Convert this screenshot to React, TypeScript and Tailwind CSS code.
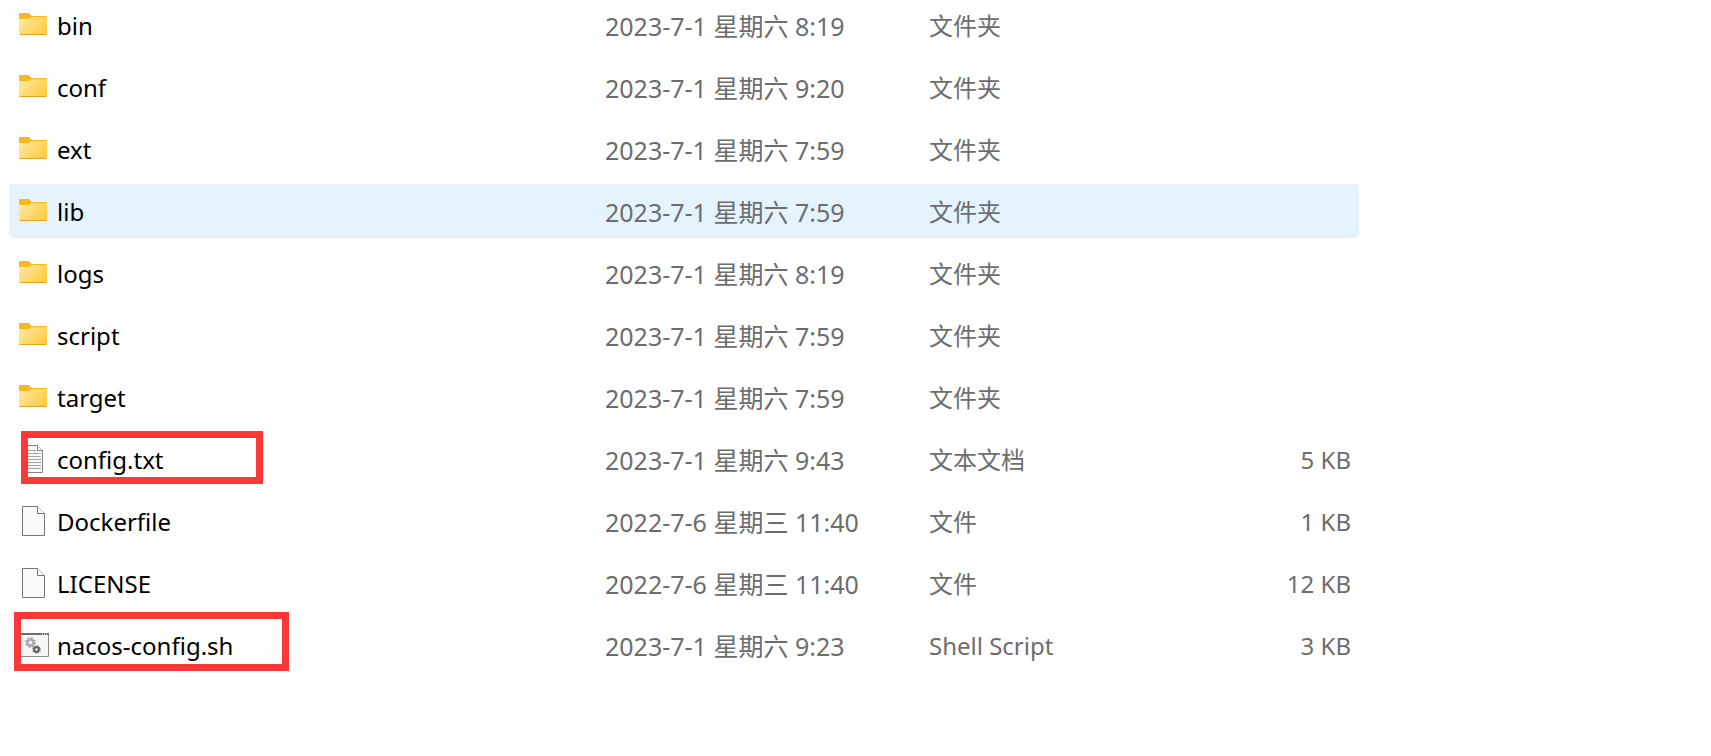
import type { ReactNode } from "react";

type Kind = "folder" | "text" | "file" | "script";

type Entry = {
  name: string;
  kind: Kind;
  modified: string;
  type: string;
  size?: string;
  hovered?: boolean;
  mark?: string;
};

const entries: Entry[] = [
  { name: "bin", kind: "folder", modified: "2023-7-1 星期六 8:19", type: "文件夹" },
  { name: "conf", kind: "folder", modified: "2023-7-1 星期六 9:20", type: "文件夹" },
  { name: "ext", kind: "folder", modified: "2023-7-1 星期六 7:59", type: "文件夹" },
  { name: "lib", kind: "folder", modified: "2023-7-1 星期六 7:59", type: "文件夹", hovered: true },
  { name: "logs", kind: "folder", modified: "2023-7-1 星期六 8:19", type: "文件夹" },
  { name: "script", kind: "folder", modified: "2023-7-1 星期六 7:59", type: "文件夹" },
  { name: "target", kind: "folder", modified: "2023-7-1 星期六 7:59", type: "文件夹" },
  {
    name: "config.txt",
    kind: "text",
    modified: "2023-7-1 星期六 9:43",
    type: "文本文档",
    size: "5 KB",
    mark: "left-[12px] -top-px w-[242px] h-[53px]",
  },
  { name: "Dockerfile", kind: "file", modified: "2022-7-6 星期三 11:40", type: "文件", size: "1 KB" },
  { name: "LICENSE", kind: "file", modified: "2022-7-6 星期三 11:40", type: "文件", size: "12 KB" },
  {
    name: "nacos-config.sh",
    kind: "script",
    modified: "2023-7-1 星期六 9:23",
    type: "Shell Script",
    size: "3 KB",
    mark: "left-[5px] -top-[6px] w-[275px] h-[59px]",
  },
];

function Icon({ children }: { children: ReactNode }) {
  return (
    <svg viewBox="0 0 32 32" className="size-8 shrink-0" fill="none" aria-hidden="true">
      {children}
    </svg>
  );
}

function FolderIcon() {
  return (
    <Icon>
      <defs>
        <linearGradient id="folder" x1="4" y1="7" x2="28" y2="27" gradientUnits="userSpaceOnUse">
          <stop stopColor="#ffe9a6" />
          <stop offset="1" stopColor="#ffc937" />
        </linearGradient>
      </defs>
      <path d="M2 5a1 1 0 0 1 1-1h8.500c1.500 0 2 3 4 3H29a1 1 0 0 1 1 1v4H2z" fill="#f9b81c" />
      <path
        d="M2 10h9.500c2 0 2.500-2 4-2H30v16.500a1.500 1.500 0 0 1-1.500 1.500h-25A1.500 1.500 0 0 1 2 24.500z"
        fill="url(#folder)"
      />
      <path d="M2.500 25.500h27" stroke="#e5a520" />
    </Icon>
  );
}

function FileIcon() {
  return (
    <Icon>
      <path d="M5.500 1.500h15l7 7v22h-22z" fill="#fafafa" stroke="#757575" />
      <path d="M20.500 1.500v7h7" fill="#fff" stroke="#757575" />
    </Icon>
  );
}

function TextIcon() {
  return (
    <Icon>
      <path d="M4.500 2.500h16l5 5v22h-21z" fill="#f7f7f7" stroke="#858585" />
      <path d="M20.500 2.500v5h5" fill="#fff" stroke="#858585" />
      <path
        d="M7 7.500h12M7 10.500h17M7 13.500h17M7 16.500h17M7 19.500h17M7 22.500h17M7 25.500h17"
        stroke="#a6a6a6"
      />
    </Icon>
  );
}

function ScriptIcon() {
  return (
    <Icon>
      <path d="M.5 4.500h31v23H.5z" fill="#f7f7f7" stroke="#8a8a8a" />
      <path d="M0 5h32" stroke="#6f6f6f" strokeWidth="2" />
      <path d="M25 5h1m1 0h1m1 0h1" stroke="#fff" />
      <circle cx="13.500" cy="13.500" r="3" stroke="#a3adb6" strokeWidth="2.400" />
      <circle cx="13.500" cy="13.500" r="4.600" stroke="#a3adb6" strokeWidth="1.800" strokeDasharray="1.900 1.710" />
      <circle cx="19.500" cy="20.500" r="2.300" stroke="#5d6367" strokeWidth="2" />
      <circle cx="19.500" cy="20.500" r="3.500" stroke="#5d6367" strokeWidth="1.400" strokeDasharray="1.500 1.250" />
    </Icon>
  );
}

const icons: Record<Kind, ReactNode> = {
  folder: <FolderIcon />,
  text: <TextIcon />,
  file: <FileIcon />,
  script: <ScriptIcon />,
};

export default function App() {
  return (
    <main className="min-h-screen overflow-hidden bg-white pr-[352px] pl-[9px] font-['Noto_Sans','Noto_Sans_CJK_SC',sans-serif] text-2xl">
      {/* The list is scrolled a little, so the first row starts above the top edge */}
      <table className="-mt-[10px] w-full table-fixed border-separate border-spacing-x-0 border-spacing-y-2 whitespace-nowrap text-left text-[#6d6d6d]">
        <colgroup>
          <col className="w-[44%]" />
          <col className="w-[24%]" />
          <col />
          <col className="w-[12%]" />
        </colgroup>
        <tbody>
          {entries.map((entry) => (
            <tr key={entry.name} className={entry.hovered ? "bg-[#e5f3ff]" : ""}>
              <th scope="row" className="relative h-[54px] rounded-l-sm p-0 pl-2 font-normal text-black">
                <div className="flex items-center gap-2">
                  {icons[entry.kind]}
                  <span className="pt-0.5">{entry.name}</span>
                </div>
                {entry.mark && <div className={`absolute border-[7px] border-[#fc3838] ${entry.mark}`} />}
              </th>
              <td className="p-0 pt-0.5 pl-0.5 text-[25px] leading-8">{entry.modified}</td>
              <td className="p-0 pt-0.5 pl-0.5">{entry.type}</td>
              <td className="rounded-r-sm p-0 pt-0.5 pr-2 text-right">{entry.size}</td>
            </tr>
          ))}
        </tbody>
      </table>
    </main>
  );
}
